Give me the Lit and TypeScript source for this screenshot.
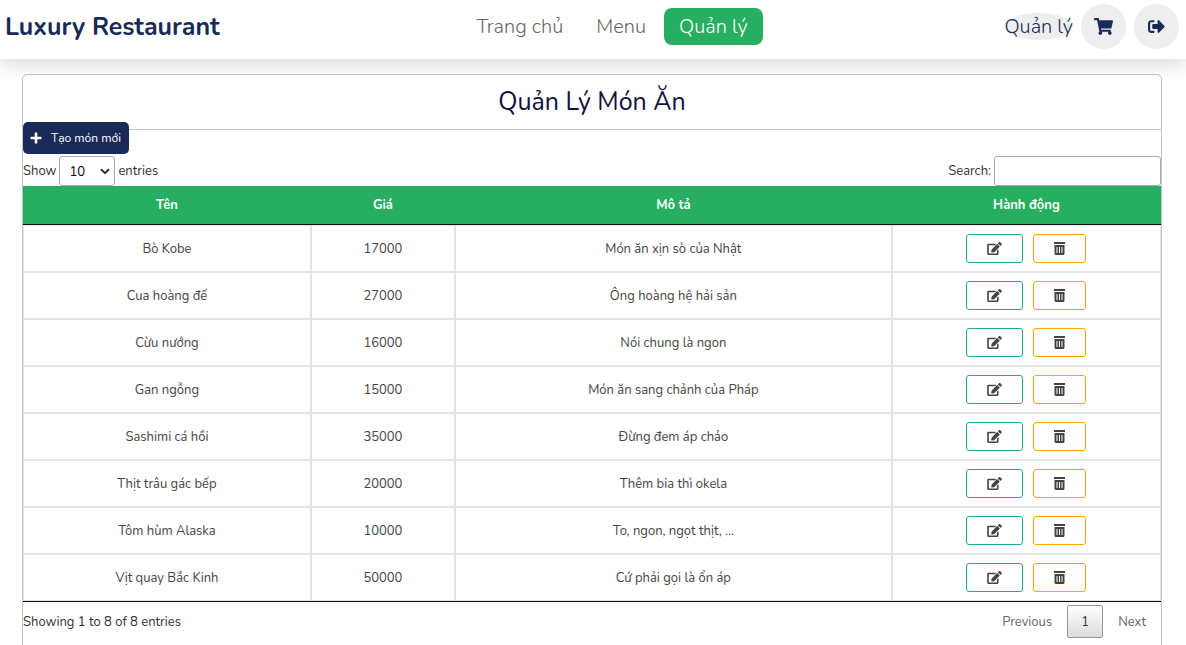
import { LitElement, html, css, svg } from "lit";
import { customElement, state } from "lit/decorators.js";

interface Dish {
  name: string;
  price: number;
  description: string;
}

const DISHES: Dish[] = [
  { name: "Bò Kobe", price: 17000, description: "Món ăn xịn sò của Nhật" },
  { name: "Cua hoàng đế", price: 27000, description: "Ông hoàng hệ hải sản" },
  { name: "Cừu nướng", price: 16000, description: "Nói chung là ngon" },
  { name: "Gan ngỗng", price: 15000, description: "Món ăn sang chảnh của Pháp" },
  { name: "Sashimi cá hồi", price: 35000, description: "Đừng đem áp chảo" },
  { name: "Thịt trâu gác bếp", price: 20000, description: "Thêm bia thì okela" },
  { name: "Tôm hùm Alaska", price: 10000, description: "To, ngon, ngọt thịt, ..." },
  { name: "Vịt quay Bắc Kinh", price: 50000, description: "Cứ phải gọi là ổn áp" },
];

const icon = (viewBox: string, size: [number, number], body: unknown) => html`
  <svg viewBox=${viewBox} width=${size[0]} height=${size[1]} fill="currentColor" aria-hidden="true">${body}</svg>
`;

const cartIcon = icon("0 0 576 512", [19, 17], svg`<path d="M528.12 301.319l47.273-208C578.806 78.301 567.391 64 551.99 64H159.208l-9.166-44.81C147.758 8.021 137.93 0 126.529 0H24C10.745 0 0 10.745 0 24v16c0 13.255 10.745 24 24 24h69.883l70.248 343.435C147.325 417.1 136 435.222 136 456c0 30.928 25.072 56 56 56s56-25.072 56-56c0-15.674-6.447-29.835-16.824-40h209.647C430.447 426.165 424 440.326 424 456c0 30.928 25.072 56 56 56s56-25.072 56-56c0-22.172-12.888-41.332-31.579-50.405l5.517-24.276c3.413-15.018-8.002-29.319-23.403-29.319H218.117l-6.545-32h293.145c11.206 0 20.92-7.754 23.403-18.681z"/>`);

const exitIcon = icon("0 0 512 512", [17, 17], svg`<path d="M497 273L329 441c-15 15-41 4.500-41-17v-96H152c-13.300 0-24-10.700-24-24v-96c0-13.300 10.700-24 24-24h136V88c0-21.400 25.900-32 41-17l168 168c9.300 9.400 9.300 24.600 0 34zM192 436v-40c0-6.600-5.400-12-12-12H96c-17.700 0-32-14.300-32-32V160c0-17.700 14.300-32 32-32h84c6.600 0 12-5.400 12-12V76c0-6.600-5.400-12-12-12H96c-53 0-96 43-96 96v192c0 53 43 96 96 96h84c6.600 0 12-5.400 12-12z"/>`);

const plusIcon = icon("0 0 12 12", [12, 12], svg`<path d="M4.700 1.200q0-.7.7-.7h1.200q.7 0 .7.7v3.500h3.500q.7 0 .7.700v1.200q0 .7-.7.7H7.300v3.500q0 .7-.7.700H5.400q-.7 0-.7-.7V7.300H1.200q-.7 0-.7-.7V5.400q0-.7.700-.7h3.500z"/>`);

const editIcon = icon("0 0 576 512", [15, 13], svg`<path d="M402.600 83.200l90.200 90.200c3.800 3.800 3.800 10 0 13.800L274.400 405.600l-92.800 10.300c-12.400 1.400-22.900-9.100-21.500-21.500l10.300-92.800L388.800 83.200c3.800-3.800 10-3.800 13.800 0zm162-22.900l-48.800-48.800c-15.200-15.200-39.900-15.200-55.200 0l-35.400 35.400c-3.800 3.800-3.800 10 0 13.800l90.200 90.200c3.800 3.800 10 3.800 13.800 0l35.400-35.400c15.200-15.300 15.200-40 0-55.200zM384 346.200V448H64V128h229.800c3.200 0 6.200-1.300 8.500-3.500l40-40c7.600-7.600 2.200-20.500-8.500-20.500H48C21.500 64 0 85.500 0 112v352c0 26.500 21.500 48 48 48h352c26.500 0 48-21.500 48-48V306.200c0-10.700-12.900-16-20.500-8.500l-40 40c-2.200 2.300-3.500 5.300-3.500 8.500z"/>`);

const trashIcon = icon("0 0 11 13", [11, 13], svg`<path fill-rule="evenodd" d="M0 0h11v2H0zM.5 3h10v8.500q0 1.500-1.500 1.500H2q-1.500 0-1.500-1.500zM2.500 5v6h1V5zM5 5v6h1V5zM7.500 5v6h1V5z"/>`);

const chevronIcon = icon("0 0 10 7", [10, 7], svg`<path d="M1 1.200l4 4 4-4" fill="none" stroke="currentColor" stroke-width="2"/>`);

@customElement("app-header")
export class AppHeader extends LitElement {
  static styles = css`
    :host {
      display: block;
      position: relative;
      z-index: 1;
    }
    .bar {
      display: flex;
      align-items: center;
      justify-content: space-between;
      height: 59px;
      padding: 0 7px 6px 5px;
      box-sizing: border-box;
      background: #fff;
      box-shadow: 0 8px 16px rgba(0, 0, 0, 0.12);
    }
    a {
      text-decoration: none;
    }
    .logo {
      font-size: 25px;
      font-weight: 700;
      color: #192a56;
    }
    .nav {
      display: flex;
      gap: 3px;
    }
    .link {
      padding: 0 15px;
      border-radius: 8px;
      font-size: 20px;
      line-height: 37px;
      font-weight: 300;
      color: #666;
    }
    .active {
      background: #27ae60;
      color: #fff;
    }
    .tools {
      display: flex;
      align-items: center;
      justify-content: flex-end;
      gap: 8px;
    }
    .account {
      border-radius: 50%;
      background: #eee;
      font-size: 20px;
      line-height: 27px;
      font-weight: 300;
      color: #192a56;
    }
    .round {
      display: flex;
      align-items: center;
      justify-content: center;
      width: 45px;
      height: 45px;
      border-radius: 50%;
      background: #eee;
      color: #192a56;
    }
  `;

  render() {
    return html`
      <header class="bar">
        <a class="logo" href="#">Luxury Restaurant</a>
        <nav class="nav">
          <a class="link" href="#">Trang chủ</a>
          <a class="link" href="#">Menu</a>
          <a class="link active" href="#">Quản lý</a>
        </nav>
        <div class="tools">
          <a class="account" href="#">Quản lý</a>
          <a class="round" href="#" aria-label="Giỏ hàng">${cartIcon}</a>
          <a class="round" href="#" aria-label="Đăng xuất">${exitIcon}</a>
        </div>
      </header>
    `;
  }
}

@customElement("dish-table")
export class DishTable extends LitElement {
  @state() private query = "";

  static styles = css`
    :host {
      display: block;
    }
    button,
    input,
    select {
      font: inherit;
    }
    .controls {
      display: flex;
      justify-content: space-between;
      margin-top: 2px;
      line-height: 30px;
    }
    .control {
      display: flex;
      align-items: center;
      gap: 3px;
    }
    .picker {
      display: grid;
      align-items: center;
    }
    .picker > * {
      grid-area: 1 / 1;
    }
    .picker svg {
      justify-self: end;
      margin-right: 5px;
      pointer-events: none;
    }
    .length {
      appearance: none;
      width: 56px;
      height: 30px;
      padding: 0 9px;
      border: 1px solid #aaa;
      border-radius: 3px;
      background: transparent;
      color: #000;
    }
    .search {
      width: 167px;
      height: 30px;
      padding: 5px;
      box-sizing: border-box;
      border: 1px solid #aaa;
      border-radius: 3px;
      background: transparent;
    }
    .table {
      width: 100%;
      table-layout: fixed;
      border-collapse: separate;
      border-spacing: 0;
      border-bottom: 1px solid #111;
      text-align: center;
    }
    .name {
      width: 25.3%;
    }
    .price {
      width: 12.65%;
    }
    .description {
      width: 38.4%;
    }
    th {
      height: 38px;
      padding: 0;
      border-bottom: 1px solid #111;
      background: #27ae60;
      color: #fff;
      font-weight: 700;
    }
    td {
      height: 45px;
      padding: 0;
      border: 1px solid #e4e4e4;
      color: #444;
    }
    .actions {
      display: flex;
      justify-content: center;
      gap: 10px;
    }
    .action {
      display: flex;
      align-items: center;
      justify-content: center;
      height: 29px;
      border: 1px solid;
      border-radius: 3px;
      background: #fff;
    }
    .action svg {
      color: #444;
    }
    .edit {
      width: 57px;
      border-color: #26a69a;
    }
    .remove {
      width: 53px;
      border-color: #ffa500;
    }
    .footer {
      display: flex;
      align-items: center;
      justify-content: space-between;
      padding: 3px 0 7px;
    }
    .pager {
      display: flex;
      align-items: center;
    }
    .page {
      height: 33px;
      padding: 0 14px;
      border: 1px solid transparent;
      border-radius: 2px;
      background: none;
      color: #666;
    }
    .current {
      width: 36px;
      padding: 0;
      border-color: #979797;
      background: linear-gradient(#fff, #dcdcdc);
      color: #333;
    }
  `;

  private onSearch(event: InputEvent) {
    this.query = (event.target as HTMLInputElement).value.toLowerCase();
  }

  render() {
    const rows = DISHES.filter((dish) => dish.name.toLowerCase().includes(this.query));
    return html`
      <div class="controls">
        <div class="control">
          <label for="length">Show</label>
          <span class="picker">
            <select class="length" id="length">
              <option>10</option>
              <option>25</option>
              <option>50</option>
              <option>100</option>
            </select>
            ${chevronIcon}
          </span>
          <span>entries</span>
        </div>
        <div class="control">
          <label for="search">Search:</label>
          <input class="search" id="search" type="search" @input=${this.onSearch} />
        </div>
      </div>
      <table class="table">
        <thead>
          <tr>
            <th class="name" scope="col">Tên</th>
            <th class="price" scope="col">Giá</th>
            <th class="description" scope="col">Mô tả</th>
            <th scope="col">Hành động</th>
          </tr>
        </thead>
        <tbody>
          ${rows.map(
            (dish) => html`
              <tr>
                <td>${dish.name}</td>
                <td>${dish.price}</td>
                <td>${dish.description}</td>
                <td>
                  <div class="actions">
                    <button class="action edit" aria-label="Sửa">${editIcon}</button>
                    <button class="action remove" aria-label="Xóa">${trashIcon}</button>
                  </div>
                </td>
              </tr>
            `,
          )}
        </tbody>
      </table>
      <div class="footer">
        <span>Showing 1 to ${rows.length} of ${rows.length} entries</span>
        <div class="pager">
          <button class="page">Previous</button>
          <button class="page current">1</button>
          <button class="page">Next</button>
        </div>
      </div>
    `;
  }
}

@customElement("app-root")
export class AppRoot extends LitElement {
  static styles = css`
    :host {
      display: block;
      height: 100vh;
      overflow: hidden;
      background: #fff;
      color: #333;
      font-family: Nunito, "Noto Sans", sans-serif;
      font-size: 13px;
    }
    .card {
      min-height: 100vh;
      margin: 15px 24px 0 22px;
      border: 1px solid #c4c4c4;
      border-radius: 5px;
      box-sizing: border-box;
    }
    .title {
      margin: 0;
      border-bottom: 1px solid #c4c4c4;
      font-size: 25px;
      line-height: 54px;
      font-weight: 400;
      text-align: center;
      color: #130f40;
    }
    .create {
      display: flex;
      align-items: center;
      gap: 9px;
      position: relative;
      height: 32px;
      margin-top: -8px;
      padding: 0 8px 0 7px;
      border: 0;
      border-radius: 5px;
      background: #192a56;
      color: #fff;
      font: inherit;
      font-size: 12px;
    }
  `;

  render() {
    return html`
      <app-header></app-header>
      <main class="card">
        <h1 class="title">Quản Lý Món Ăn</h1>
        <button class="create">${plusIcon} Tạo món mới</button>
        <dish-table></dish-table>
      </main>
    `;
  }
}
